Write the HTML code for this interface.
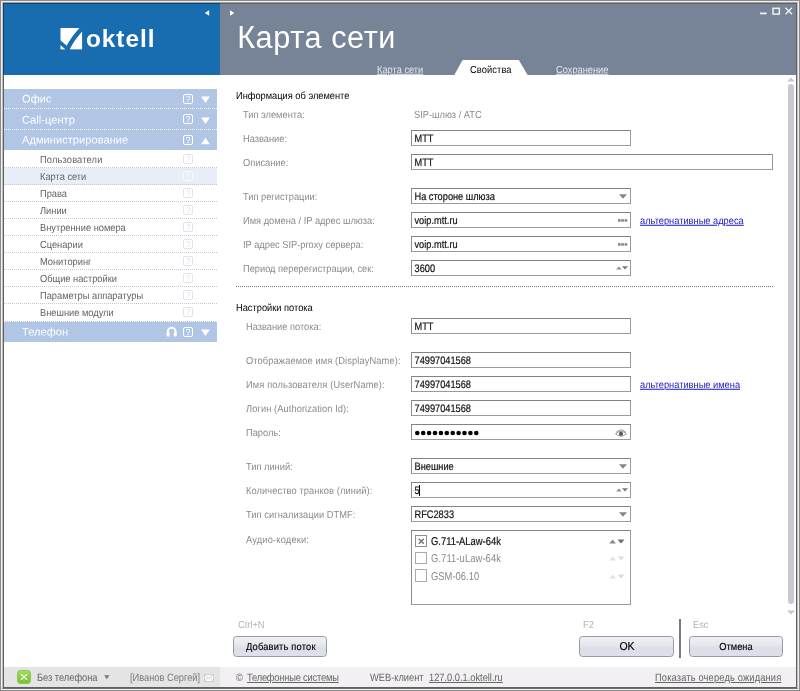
<!DOCTYPE html>
<html lang="ru">
<head>
<meta charset="utf-8">
<title>Карта сети</title>
<style>
*{box-sizing:border-box;margin:0;padding:0}
html,body{width:800px;height:691px;overflow:hidden;background:#8c8c8c}
body{font-family:"Liberation Sans",sans-serif;font-size:11px;color:#000;position:relative}
.abs,body div,body svg{position:absolute}
#f1{left:1px;top:1px;width:798px;height:689px;background:#efefef}
#f2{left:2px;top:2px;width:796px;height:687px;border:1px solid #c0c0c0;border-top-color:#a0a0a0;border-bottom-color:#707070}
#f3{left:3px;top:3px;width:794px;height:685px;background:#606060}
#f4{left:3px;top:3px;width:217px;height:72px;background:#173f69}
#win{left:4px;top:4px;width:792px;height:683px;background:#fff}
#logo{left:4px;top:4px;width:216px;height:71px;background:#186cb0}
#hdr{left:220px;top:4px;width:576px;height:71px;background:#778396}
#title{left:237.2px;top:19.4px;font-size:30.6px;letter-spacing:.6px;line-height:36px;color:#fff;white-space:nowrap}
.tab{color:#e6e9ee;text-decoration:underline}
#tabtxt{color:#000}
/* sidebar */
.t{font-size:10.2px;line-height:13px;white-space:nowrap;transform:translateY(-.3px) rotate(.03deg) scaleX(.91);transform-origin:0 10px}
.tc{transform-origin:50% 10px}
.t2{font-size:11.3px;line-height:13px;white-space:nowrap;transform:translateY(.5px) rotate(.03deg) scaleX(.833);transform-origin:0 10px}
#sbbg{left:4px;top:89px;width:213px;height:61px;background:#b1c6e5}
.dl{left:4px;width:213px;height:0;border-top:1px dotted #fff}
.sh{left:22px;color:#fff;font-size:11px;line-height:13px;white-space:nowrap;letter-spacing:.08px;transform:translateY(-.5px) rotate(.03deg);transform-origin:0 10px}
.si{left:4px;width:213px;height:17px;border-bottom:1px dotted #c6c8d0}
.si.sel{background:#e8edf8}
.sit{left:39.5px;color:#626262}
.q{left:183px;width:10px;height:10px;border:1px solid #fff;border-radius:2px;color:#fff;font-size:8.5px;line-height:8px;text-align:center}
.q.g{left:183px;width:10px;height:10px;border-color:#e1e4ec;color:#e1e4ec;font-size:8.5px;line-height:8px}
/* form */
.lb{left:243px;color:#8a8a8a;margin-top:.3px}
.hd{left:236px;color:#000}
.in{left:411px;width:220px;height:16px;border:1px solid #9a9a9a;border-top-color:#828282;border-left-color:#8e8e8e;background:#fff}
.v{left:414px;color:#111;font-size:10.9px;transform:translate(-.5px,.2px) rotate(.03deg) scaleX(.848);-webkit-text-stroke:.2px #111}
.t2.v{font-size:11.3px;transform:translateY(.5px) rotate(.03deg) scaleX(.833)}
.t2.lb{margin-top:0}
.lnk{color:#1616c0;text-decoration:underline}
.btn{height:20px;border:1px solid #979aa4;border-radius:3.5px;background:linear-gradient(#eff0f4,#e6e8ee 40%,#dcdfe7 60%,#dde0e8)}
.key{color:#b4b4b4}
.bt{-webkit-text-stroke:.15px #000}
.st{color:#666}
.st2{color:#7a7a7a}
.st,.st2{font-size:10.7px;transform:translateY(-.1px) rotate(.03deg) scaleX(.868)}
.u{text-decoration:underline}
</style>
</head>
<body>
<div id="root" style="left:0;top:0;width:800px;height:691px;will-change:transform">
<div id="f1"></div>
<div id="f2"></div>
<div id="f3"></div>
<div id="f4"></div>
<div id="win"></div>
<div id="hdr"></div>
<div id="logo"></div>
<svg id="logosvg" style="left:60px;top:27px" width="24" height="24" viewBox="0 0 24 24">
<rect x="0.5" y="1" width="21.6" height="21.6" fill="#fff"/>
<path d="M7.6 21.8 Q13 10.5 23.8 -0.4" fill="none" stroke="#186cb0" stroke-width="4.4" stroke-linecap="round"/>
<path d="M-0.8 14.6 L7.6 21.8" fill="none" stroke="#186cb0" stroke-width="3.6" stroke-linecap="round"/>
<rect x="0" y="22.6" width="24" height="2" fill="#186cb0"/>
</svg>
<div id="logotxt" style="left:86px;top:22.6px;font-size:24.4px;line-height:32px;font-weight:bold;color:#fff;letter-spacing:.95px;white-space:nowrap">oktell</div>
<svg style="left:204px;top:9px" width="6" height="8" viewBox="0 0 6 8"><polygon points="5.2,1.2 5.2,6.8 0.8,4" fill="#fff"/></svg>
<svg style="left:229.4px;top:9px" width="6" height="8" viewBox="0 0 6 8"><polygon points="1,1.2 1,6.8 5.4,4" fill="#fff"/></svg>
<svg style="left:756px;top:5.3px" width="40" height="12" viewBox="0 0 40 12">
<rect x="4" y="7.5" width="6.8" height="1.8" fill="#eef0f3"/>
<rect x="17" y="3.3" width="6.3" height="5.8" fill="none" stroke="#eef0f3" stroke-width="1.5"/>
<path d="M29.5 2.8 L36 9.3 M36 2.8 L29.5 9.3" stroke="#eef0f3" stroke-width="1.4" fill="none"/>
</svg>

<div id="title">Карта сети</div>
<div class="t tab" style="left:377px;top:62.6px">Карта сети</div>
<svg style="left:452px;top:59px" width="78" height="16" viewBox="0 0 78 16"><path d="M2.3 16 L10.3 1.6 Q10.6 1.1 11.2 1.1 L66.2 1.1 Q66.8 1.1 67.1 1.6 L75.6 16 Z" fill="#fff"/></svg>
<div class="t" id="tabtxt" style="left:470px;top:62.6px;letter-spacing:.12px">Свойства</div>
<div class="t tab" style="left:556.2px;top:62.6px">Сохранение</div>
<div id="sbbg"></div>
<div class="dl" style="top:108px"></div>
<div class="dl" style="top:129px"></div>
<div class="sh" style="top:92.9px">Офис</div>
<div class="q" style="top:93.7px">?</div>
<svg style="left:201px;top:96.2px" width="9" height="8" viewBox="0 0 9 8"><polygon points="0.1,0.5 8.8,0.5 4.45,7.1" fill="#fff"/></svg>
<div class="sh" style="top:113.5px">Call-центр</div>
<div class="q" style="top:114.4px">?</div>
<svg style="left:201px;top:116.9px" width="9" height="8" viewBox="0 0 9 8"><polygon points="0.1,0.5 8.8,0.5 4.45,7.1" fill="#fff"/></svg>
<div class="sh" style="top:134.0px">Администрирование</div>
<div class="q" style="top:134.8px">?</div>
<svg style="left:201px;top:137.3px" width="9" height="8" viewBox="0 0 9 8"><polygon points="0.1,7.3 8.8,7.3 4.45,0.7" fill="#fff"/></svg>
<div class="si" style="top:151px"></div>
<div class="t sit" style="top:152.5px;letter-spacing:.18px">Пользователи</div>
<div class="q g" style="top:154.0px">?</div>
<div class="si sel" style="top:168px"></div>
<div class="t sit" style="top:169.5px">Карта сети</div>
<div class="q g" style="top:171.0px;border-color:#f8f9fd;color:#f8f9fd">?</div>
<div class="si" style="top:185px"></div>
<div class="t sit" style="top:186.5px">Права</div>
<div class="q g" style="top:188.0px">?</div>
<div class="si" style="top:202px"></div>
<div class="t sit" style="top:203.5px">Линии</div>
<div class="q g" style="top:205.0px">?</div>
<div class="si" style="top:219px"></div>
<div class="t sit" style="top:220.5px">Внутренние номера</div>
<div class="q g" style="top:222.0px">?</div>
<div class="si" style="top:236px"></div>
<div class="t sit" style="top:237.5px">Сценарии</div>
<div class="q g" style="top:239.0px">?</div>
<div class="si" style="top:253px"></div>
<div class="t sit" style="top:254.5px">Мониторинг</div>
<div class="q g" style="top:256.0px">?</div>
<div class="si" style="top:270px"></div>
<div class="t sit" style="top:271.5px">Общие настройки</div>
<div class="q g" style="top:273.0px">?</div>
<div class="si" style="top:287px"></div>
<div class="t sit" style="top:288.5px">Параметры аппаратуры</div>
<div class="q g" style="top:290.0px">?</div>
<div class="si" style="top:304px;border-bottom:none"></div>
<div class="t sit" style="top:305.5px">Внешние модули</div>
<div class="q g" style="top:307.0px">?</div>
<div style="left:4px;top:320.8px;width:213px;height:20.9px;background:#b1c6e5;border-top:1px dotted #fff"></div>
<div class="sh" style="top:325.6px">Телефон</div>
<div class="q" style="top:326.5px">?</div>
<svg style="left:201px;top:329.0px" width="9" height="8" viewBox="0 0 9 8"><polygon points="0.1,0.5 8.8,0.5 4.45,7.1" fill="#fff"/></svg>
<svg style="left:165.5px;top:326px" width="12" height="11" viewBox="0 0 12 11"><path d="M1.8 7.5 V5.6 A3.9 3.9 0 0 1 9.6 5.6 V7.5" fill="none" stroke="#fff" stroke-width="2"/><rect x="0.7" y="6.2" width="2.9" height="4.4" rx="1" fill="#fff"/><rect x="7.8" y="6.2" width="2.9" height="4.4" rx="1" fill="#fff"/></svg>

<div class="t hd" style="left:236px;top:88.8px">Информация об элементе</div>
<div class="t lb" style="left:243.4px;top:107.8px">Тип элемента:</div>
<div class="t lb" style="left:413.8px;top:107.8px">SIP-шлюз / АТС</div>
<div class="t lb" style="left:243.4px;top:131.8px">Название:</div>
<div class="in" style="top:130.2px;width:219.5px;height:16.3px"></div>
<div class="t v" style="left:414.5px;top:131.8px">МТТ</div>
<div class="t lb" style="left:243.4px;top:155.8px">Описание:</div>
<div class="in" style="top:154.2px;width:361.5px;height:16.3px"></div>
<div class="t v" style="left:414.5px;top:155.8px">МТТ</div>
<div class="t lb" style="left:243.4px;top:189.8px">Тип регистрации:</div>
<div class="in" style="top:188.2px;width:219.5px;height:16.3px"></div>
<div class="t v" style="left:414.5px;top:189.8px">На стороне шлюза</div>
<svg style="left:619.4px;top:193.9px" width="9" height="6" viewBox="0 0 9 6"><polygon points="0,0.2 8,0.2 4,4.7" fill="#868686"/></svg>
<div class="t lb" style="left:243.4px;top:213.8px">Имя домена / IP адрес шлюза:</div>
<div class="in" style="top:212.2px;width:219.5px;height:16.3px"></div>
<div class="t v" style="left:414.5px;top:213.8px">voip.mtt.ru</div>
<svg style="left:617.9px;top:219.0px" width="10" height="3" viewBox="0 0 10 3"><rect x="0" y="0.2" width="2.6" height="2.5" fill="#828282"/><rect x="3.3" y="0.2" width="2.6" height="2.5" fill="#828282"/><rect x="6.6" y="0.2" width="2.6" height="2.5" fill="#828282"/></svg>
<div class="t lb" style="left:243.4px;top:237.8px">IP адрес SIP-proxy сервера:</div>
<div class="in" style="top:236.2px;width:219.5px;height:16.3px"></div>
<div class="t v" style="left:414.5px;top:237.8px">voip.mtt.ru</div>
<svg style="left:617.9px;top:243.0px" width="10" height="3" viewBox="0 0 10 3"><rect x="0" y="0.2" width="2.6" height="2.5" fill="#828282"/><rect x="3.3" y="0.2" width="2.6" height="2.5" fill="#828282"/><rect x="6.6" y="0.2" width="2.6" height="2.5" fill="#828282"/></svg>
<div class="t lb" style="left:243.4px;top:261.8px">Период перерегистрации, сек:</div>
<div class="in" style="top:260.2px;width:219.5px;height:16.3px"></div>
<div class="t v" style="left:414.5px;top:261.8px">3600</div>
<svg style="left:616px;top:265.8px" width="13" height="5" viewBox="0 0 13 5"><polygon points="0.2,3.6 5.6,3.6 2.9,0.4" fill="#8c8c8c"/><polygon points="6,0.2 12,0.2 9,3.4" fill="#777"/></svg>
<div class="t lnk" style="left:639.5px;top:213.8px">альтернативные адреса</div>
<div style="left:236px;top:285.5px;width:537px;height:0;border-top:1px dotted #777"></div>
<div class="t hd" style="left:236px;top:301.0px">Настройки потока</div>
<div class="t lb" style="left:245.5px;top:319.8px">Название потока:</div>
<div class="in" style="top:318.2px;width:219.5px;height:16.3px"></div>
<div class="t v" style="left:414.5px;top:319.8px">МТТ</div>
<div class="t lb" style="left:245.5px;top:353.8px;letter-spacing:0.13px">Отображаемое имя (DisplayName):</div>
<div class="in" style="top:352.2px;width:219.5px;height:16.3px"></div>
<div class="t v" style="left:414.5px;top:353.8px">74997041568</div>
<div class="t lb" style="left:245.5px;top:377.8px;letter-spacing:0.15px">Имя пользователя (UserName):</div>
<div class="in" style="top:376.2px;width:219.5px;height:16.3px"></div>
<div class="t v" style="left:414.5px;top:377.8px">74997041568</div>
<div class="t lb" style="left:245.5px;top:401.8px;letter-spacing:0.1px">Логин (Authorization Id):</div>
<div class="in" style="top:400.2px;width:219.5px;height:16.3px"></div>
<div class="t v" style="left:414.5px;top:401.8px">74997041568</div>
<div class="t lb" style="left:245.5px;top:425.8px">Пароль:</div>
<div class="in" style="top:424.2px;width:219.5px;height:16.3px"></div>
<div class="t lb" style="left:245.5px;top:459.8px">Тип линий:</div>
<div class="in" style="top:458.2px;width:219.5px;height:16.3px"></div>
<div class="t v" style="left:414.5px;top:459.8px">Внешние</div>
<svg style="left:619.4px;top:463.8px" width="9" height="6" viewBox="0 0 9 6"><polygon points="0,0.2 8,0.2 4,4.7" fill="#868686"/></svg>
<div class="t lb" style="left:245.5px;top:483.8px;letter-spacing:0.11px">Количество транков (линий):</div>
<div class="in" style="top:482.2px;width:219.5px;height:16.3px"></div>
<div class="t v" style="left:414.5px;top:483.8px">5</div>
<svg style="left:616px;top:487.8px" width="13" height="5" viewBox="0 0 13 5"><polygon points="0.2,3.6 5.6,3.6 2.9,0.4" fill="#8c8c8c"/><polygon points="6,0.2 12,0.2 9,3.4" fill="#777"/></svg>
<div class="t lb" style="left:245.5px;top:507.8px;letter-spacing:0.07px">Тип сигнализации DTMF:</div>
<div class="in" style="top:506.2px;width:219.5px;height:16.3px"></div>
<div class="t v" style="left:414.5px;top:507.8px">RFC2833</div>
<svg style="left:619.4px;top:511.8px" width="9" height="6" viewBox="0 0 9 6"><polygon points="0,0.2 8,0.2 4,4.7" fill="#868686"/></svg>
<div class="t lnk" style="left:639.5px;top:377.8px">альтернативные имена</div>
<svg style="left:414px;top:429px" width="68" height="8" viewBox="0 0 68 8"><circle cx="3.30" cy="4" r="2.3" fill="#000"/><circle cx="9.20" cy="4" r="2.3" fill="#000"/><circle cx="15.10" cy="4" r="2.3" fill="#000"/><circle cx="21.00" cy="4" r="2.3" fill="#000"/><circle cx="26.90" cy="4" r="2.3" fill="#000"/><circle cx="32.80" cy="4" r="2.3" fill="#000"/><circle cx="38.70" cy="4" r="2.3" fill="#000"/><circle cx="44.60" cy="4" r="2.3" fill="#000"/><circle cx="50.50" cy="4" r="2.3" fill="#000"/><circle cx="56.40" cy="4" r="2.3" fill="#000"/><circle cx="62.30" cy="4" r="2.3" fill="#000"/></svg>
<svg style="left:615px;top:427.5px" width="12" height="10" viewBox="0 0 12 10"><path d="M1.2 4.4 Q6 -0.6 10.8 4.4" fill="none" stroke="#b0b0b0" stroke-width="1.3"/><path d="M0.6 5.8 Q6 0.8 11.4 5.8 Q6 10.6 0.6 5.8 Z" fill="#fff" stroke="#8c8c8c" stroke-width="0.9"/><circle cx="6" cy="5.8" r="2.1" fill="#5a5a5a"/></svg>
<div style="left:418.8px;top:485px;width:1px;height:11px;background:#000"></div>
<div class="t lb" style="left:245.5px;top:532.5px;letter-spacing:0.2px">Аудио-кодеки:</div>
<div class="in" style="top:530.2px;width:219.5px;height:75.3px"></div>
<div style="left:415.2px;top:534.90px;width:12px;height:12.3px;border:1px solid #8e8e8e;background:#fff"></div>
<svg style="left:417.7px;top:537.90px" width="7" height="7" viewBox="0 0 7 7"><path d="M0.8 0.8 L5.8 5.8 M5.8 0.8 L0.8 5.8" stroke="#6a6f7a" stroke-width="1.4" fill="none"/></svg>
<div class="t2 v" style="left:430.8px;top:534.08px">G.711-ALaw-64k</div>
<svg style="left:608.5px;top:539.10px" width="16" height="5" viewBox="0 0 16 5"><polygon points="0.3,4.6 7,4.6 3.6,0.4" fill="#8a8a8a"/><polygon points="8.5,0.4 15.5,0.4 12,4.6" fill="#6e6e6e"/></svg>
<div style="left:415.2px;top:552.15px;width:12px;height:12.3px;border:1px solid #aaa;background:#fff"></div>
<div class="t2 lb" style="left:430.8px;top:551.33px;letter-spacing:0.1px">G.711-uLaw-64k</div>
<svg style="left:608.5px;top:556.35px" width="16" height="5" viewBox="0 0 16 5"><polygon points="0.3,4.6 7,4.6 3.6,0.4" fill="#e2e2e2"/><polygon points="8.5,0.4 15.5,0.4 12,4.6" fill="#dcdcdc"/></svg>
<div style="left:415.2px;top:569.40px;width:12px;height:12.3px;border:1px solid #aaa;background:#fff"></div>
<div class="t2 lb" style="left:430.8px;top:568.58px">GSM-06.10</div>
<svg style="left:608.5px;top:573.60px" width="16" height="5" viewBox="0 0 16 5"><polygon points="0.3,4.6 7,4.6 3.6,0.4" fill="#e2e2e2"/><polygon points="8.5,0.4 15.5,0.4 12,4.6" fill="#dcdcdc"/></svg>
<svg style="left:786px;top:76px" width="10" height="7" viewBox="0 0 10 7"><polygon points="1,5.5 9,5.5 5,1.5" fill="#c8c8cc"/></svg>
<div style="left:788px;top:84px;width:6px;height:520px;background:#c9c9d3;border-radius:3px"></div>
<svg style="left:786px;top:609px" width="10" height="7" viewBox="0 0 10 7"><polygon points="1,1.5 9,1.5 5,5.5" fill="#c8c8cc"/></svg>
<div class="t key" style="left:237.5px;top:617.6px">Ctrl+N</div>
<div class="t key" style="left:583.4px;top:617.6px">F2</div>
<div class="t key" style="left:693px;top:617.6px">Esc</div>
<div class="btn" style="left:233.3px;top:636.3px;width:94.2px;height:20.5px"></div>
<div class="t tc bt" style="left:233.8px;top:640.0px;width:93.7px;text-align:center;color:#000;letter-spacing:.22px">Добавить поток</div>
<div class="btn" style="left:579px;top:636.3px;width:94.5px;height:20.5px"></div>
<div class="t tc bt" style="left:579.5px;top:640.0px;width:94.0px;text-align:center;color:#000;font-size:11.5px">OK</div>
<div class="btn" style="left:689px;top:636.3px;width:94px;height:20.5px"></div>
<div class="t tc bt" style="left:689px;top:640.0px;width:94px;text-align:center;color:#000">Отмена</div>
<div style="left:679.3px;top:618.5px;width:1.6px;height:39.5px;background:#757a84"></div>
<div style="left:4px;top:667px;width:216px;height:20px;background:#e4e4e4"></div>
<div style="left:220px;top:667px;width:576px;height:20px;background:#f2f0f2"></div>
<svg style="left:17px;top:670px" width="14" height="14" viewBox="0 0 14 14"><defs><linearGradient id="gg" x1="0" y1="0" x2="0" y2="1"><stop offset="0" stop-color="#a4dc62"/><stop offset="1" stop-color="#76bf3a"/></linearGradient></defs><rect x="0.5" y="0.5" width="13" height="13" rx="3" fill="url(#gg)" stroke="#86c84c"/><path d="M4 4.2 L10 9.8 M10 4.2 L4 9.8" stroke="#fff" stroke-opacity=".85" stroke-width="1.25" fill="none"/></svg>
<div class="t st" style="left:36.6px;top:670.5px">Без телефона</div>
<svg style="left:103.7px;top:675px" width="7" height="5" viewBox="0 0 7 5"><polygon points="0.2,0.2 5.4,0.2 2.8,4.3" fill="#777"/></svg>
<div class="t st2" style="left:129.6px;top:670.5px">[Иванов Сергей]</div>
<svg style="left:204px;top:673.9px" width="10" height="8" viewBox="0 0 10 8"><rect x="0.5" y="0.5" width="9" height="7" fill="#fafafa" stroke="#cfcfcf"/><path d="M0.5 0.5 L5 4.5 L9.5 0.5 M0.5 7.5 L3.7 3.6 M9.5 7.5 L6.3 3.6" fill="none" stroke="#cfcfcf" stroke-width="0.8"/></svg>
<div class="t st" style="left:235.5px;top:670.5px">©</div>
<div class="t st u" style="left:246.8px;top:670.5px;letter-spacing:-.2px">Телефонные системы</div>
<div class="t st" style="left:370px;top:670.5px">WEB-клиент</div>
<div class="t st u" style="left:428.8px;top:670.5px">127.0.0.1.oktell.ru</div>
<div class="t st u" style="left:655.4px;top:670.5px;letter-spacing:.19px">Показать очередь ожидания</div>

</div>
</body>
</html>
